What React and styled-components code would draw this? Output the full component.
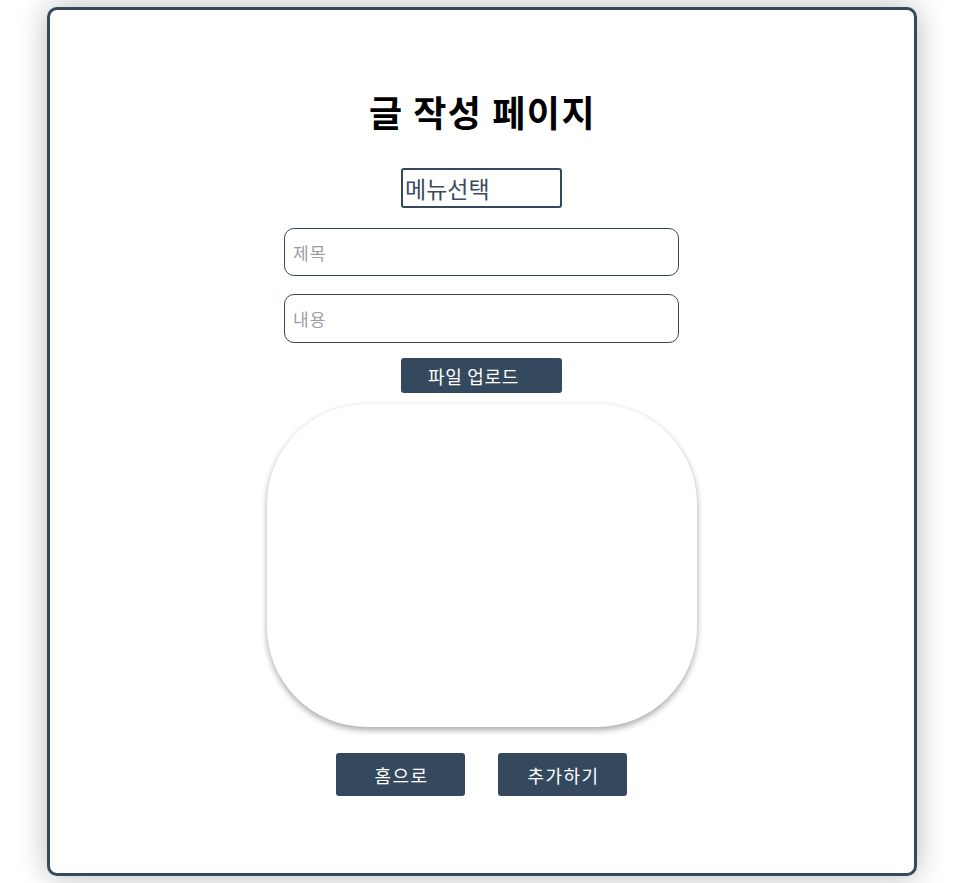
import React from "react";
import styled, { createGlobalStyle } from "styled-components";

const Global = createGlobalStyle`
  html, body { margin: 0; padding: 0; background: #ffffff; }
  body { font-family: "Noto Sans CJK KR", "Noto Sans", sans-serif; }
  * { box-sizing: border-box; }
`;

const Page = styled.div`
  width: 963px;
  height: 883px;
  padding-top: 7px;
  display: flex;
  justify-content: center;
  overflow: hidden;
`;

const Card = styled.div`
  width: 870px;
  height: 869px;
  border: 3px solid #34495e;
  border-radius: 10px;
  background: #fff;
  box-shadow: 0 0 30px rgba(0, 0, 0, 0.28);
  display: flex;
  flex-direction: column;
  align-items: center;
  padding-top: 81px;
`;

const Title = styled.h1`
  margin: 0;
  font-size: 36px;
  line-height: 40px;
  font-weight: 700;
  letter-spacing: 1.5px;
  padding-left: 2px;
  color: #000;
`;

const MenuSelect = styled.div`
  margin-top: 37px;
  width: 161px;
  height: 40px;
  border: 2px solid #34495e;
  border-radius: 3px;
  display: flex;
  align-items: center;
  padding-left: 2px;
  font-size: 23px;
  color: #3a4b60;
`;

const Field = styled.input`
  margin-top: ${(p) => p.$gap}px;
  width: 395px;
  height: ${(p) => p.$h}px;
  border: 1px solid #34495e;
  border-radius: 10px;
  padding: 0 8px;
  font-family: inherit;
  font-size: 17px;
  letter-spacing: 1px;
  outline: none;
  &::placeholder { color: #9a9ea4; }
`;

const UploadButton = styled.div`
  margin-top: 15px;
  width: 161px;
  height: 35px;
  background: #34495e;
  color: #fff;
  border-radius: 3px;
  display: flex;
  align-items: center;
  padding-left: 27px;
  font-size: 18px;
  letter-spacing: 0.7px;
`;

const Preview = styled.div`
  margin-top: 11px;
  width: 430px;
  height: 323px;
  border-radius: 100px;
  background: #fff;
  box-shadow: 0 3px 6px rgba(0, 0, 0, 0.35);
`;

const ButtonRow = styled.div`
  margin-top: 26px;
  display: flex;
  gap: 33px;
`;

const ActionButton = styled.button`
  width: 129px;
  height: 43px;
  border: none;
  border-radius: 3px;
  background: #34495e;
  color: #fff;
  font-family: inherit;
  font-size: 18px;
  letter-spacing: 1.5px;
  padding: 0 0 0 2px;
  cursor: pointer;
`;

export default function App() {
  return (
    <>
      <Global />
      <Page>
        <Card>
          <Title>글 작성 페이지</Title>
          <MenuSelect>메뉴선택</MenuSelect>
          <Field $gap={20} $h={48} placeholder="제목" />
          <Field $gap={18} $h={49} placeholder="내용" />
          <UploadButton>파일 업로드</UploadButton>
          <Preview />
          <ButtonRow>
            <ActionButton>홈으로</ActionButton>
            <ActionButton>추가하기</ActionButton>
          </ButtonRow>
        </Card>
      </Page>
    </>
  );
}
